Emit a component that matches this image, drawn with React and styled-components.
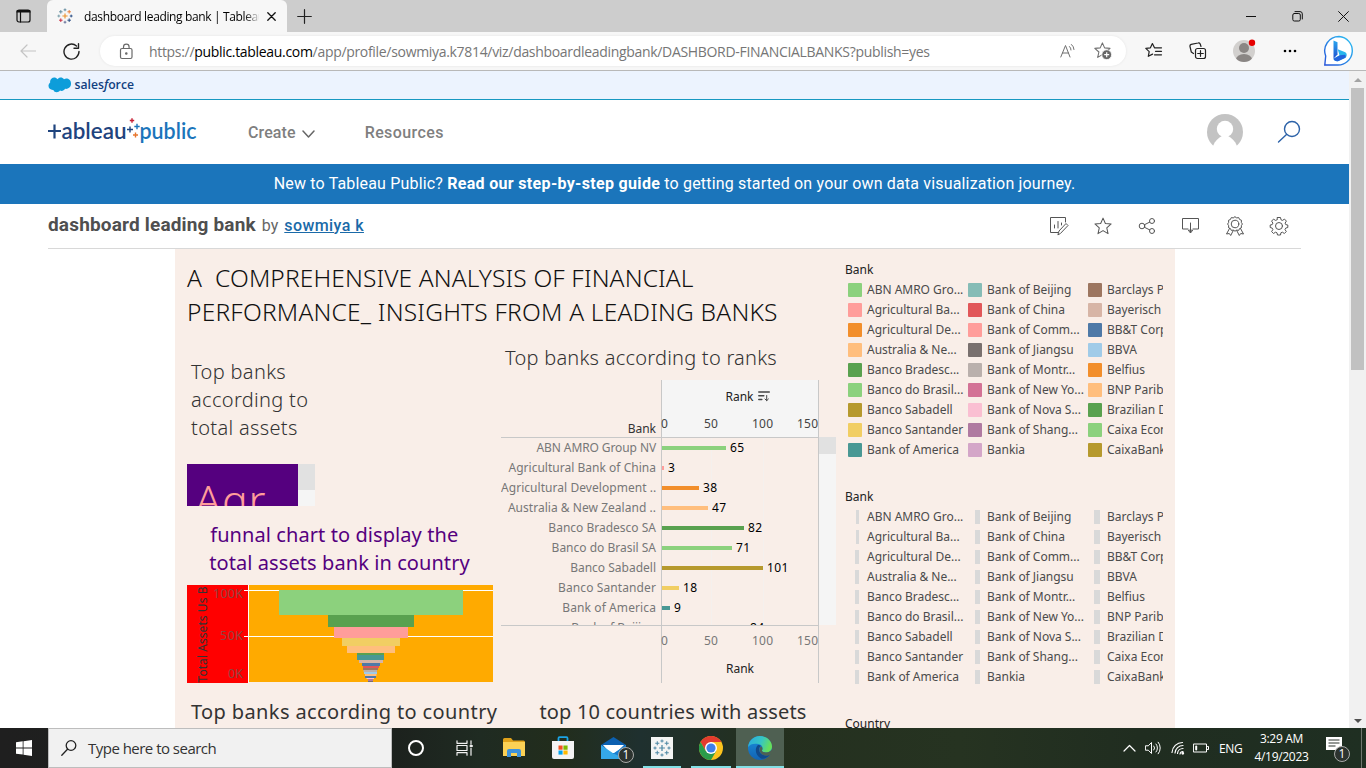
import React from "react";
import styled, { createGlobalStyle } from "styled-components";

const UI = `"Open Sans", "Noto Sans", sans-serif`;
const BENTON = `Roboto, "Liberation Sans", sans-serif`;
const VIZ = `"Noto Sans", "Open Sans", sans-serif`;

const Global = createGlobalStyle`
  * { box-sizing: border-box; }
  body { margin: 0; overflow: hidden; background: #fff; }
  h1, h2, h3, p { margin: 0; font-weight: inherit; }
  svg { display: block; flex: none; }
`;

/* ---------- browser chrome ---------- */
const Screen = styled.div`
  width: 1366px; height: 768px; display: flex; flex-direction: column; overflow: hidden;
  font-family: ${UI};
`;
const TabStrip = styled.div`
  height: 32px; flex: none; background: #cdcdcd; display: flex; align-items: center;
`;
const TabActions = styled.div`
  width: 47px; display: flex; justify-content: center;
`;
const Tab = styled.div`
  width: 240px; height: 32px; background: #f7f7f7; border-radius: 6px 6px 0 0;
  display: flex; align-items: center; padding: 0 11px 0 10px;
`;
const TabTitle = styled.div`
  width: 175px; margin-left: 11px; overflow: hidden; white-space: nowrap; font-size: 12px;
  letter-spacing: -0.36px; color: #000;
  mask-image: linear-gradient(to right, #000 160px, transparent 177px);
`;
const TabClose = styled.div`margin-left: auto;`;
const NewTab = styled.div`margin-left: 10px;`;
const WindowButtons = styled.div`
  margin-left: auto; display: flex;
  & > div { width: 46px; height: 32px; display: grid; place-items: center; }
`;
const Toolbar = styled.div`
  height: 39px; flex: none; background: #f7f7f7; border-bottom: 1px solid #b8b8b8;
  display: flex; align-items: center; padding-left: 20px;
`;
const ReloadSlot = styled.div`margin-left: 27px;`;
const AddressBar = styled.div`
  width: 1026px; height: 30px; margin-left: 20px; border-radius: 15px; background: #fff;
  box-shadow: 0 0 3px rgba(0,0,0,.08); display: flex; align-items: center; padding: 0 14px 0 19px;
`;
const Url = styled.div`
  margin-left: 15px; font-size: 14px; letter-spacing: -0.315px; color: #767676; white-space: nowrap;
  b { font-weight: 400; color: #000; }
`;
const AddressIcons = styled.div`margin-left: auto; display: flex; align-items: center; gap: 18px;`;
const ToolIcons = styled.div`
  flex: 1; display: flex; align-items: center; padding-left: 19px; gap: 25.500px;
`;

/* ---------- page ---------- */
const Viewport = styled.div`height: 657px; flex: none; display: flex; background: #fff;`;
const Page = styled.div`width: 1349px; overflow: hidden; display: flex; flex-direction: column;`;
const Scrollbar = styled.div`
  width: 17px; background: #f1f1f1; display: flex; flex-direction: column; align-items: center;
  padding: 7px 0 5px;
`;
const Thumb = styled.div`width: 13px; height: 282px; margin: 6px 0 auto; background: #c1c1c1;`;

const SalesforceBar = styled.div`
  height: 29px; flex: none; background: #ecf3fe; border-bottom: 1px solid #1798c1;
  padding: 5px 0 0 48px; display: flex;
`;
const SiteHeader = styled.header`
  height: 64px; flex: none; display: flex; align-items: center; padding: 0 48px;
  font-family: ${BENTON};
`;
const NavItem = styled.div`
  display: flex; align-items: center; gap: 6px; font-size: 16px; font-weight: 500; color: #7f7f7f;
  margin-left: ${(p) => p.$gap}px; letter-spacing: ${(p) => p.$track || 0}px;
`;
const Chevron = styled.span`padding-top: 4px;`;
const HeaderRight = styled.div`margin-left: auto; display: flex; align-items: center; gap: 34px;`;
const Banner = styled.div`
  height: 40px; flex: none; background: #1b75bb; color: #fff; text-align: center;
  font: 400 16px/39px ${BENTON}; letter-spacing: 0.17px;
  b { font-weight: 700; letter-spacing: .32px; }
`;
const TitleRow = styled.div`
  height: 45px; flex: none; margin: 0 48px; border-bottom: 1px solid #d8d8d8; display: flex;
  align-items: center; font-family: ${BENTON}; padding-right: 12px;
`;
const VizTitle = styled.h1`
  font-size: 19px; font-weight: 700; color: #4f4f4f; letter-spacing: 0.17px; white-space: nowrap;
  padding-bottom: 4px;
`;
const Byline = styled.div`
  padding-bottom: 2px; margin-left: 6px; font-size: 16px; color: #666; white-space: nowrap;
  a { color: #1a6aa8; font-weight: 500; text-decoration: underline; margin-left: 2px; letter-spacing: .42px; }
`;
const Actions = styled.div`margin-left: auto; display: flex; gap: 24px; align-items: center;`;

/* ---------- dashboard ---------- */
const Dashboard = styled.main`
  width: 1000px; height: 479px; margin-left: 175px; background: #f9eee8; overflow: hidden;
  display: flex; font-family: ${VIZ}; color: #333;
`;
const MainColumn = styled.div`width: 660px; flex: none; padding-left: 12px;`;
const Heading = styled.h2`
  height: 95px; padding-top: 12px; font-size: 24.5px; line-height: 34px; font-weight: 300;
  color: #111; white-space: pre;
`;
const HeadingLine = styled.span`display: block; letter-spacing: ${(p) => p.$track}px;`;
const Panels = styled.div`display: flex; height: 339px;`;
const LeftPanel = styled.section`width: 314px; flex: none;`;
const PanelTitle = styled.h3`
  font-size: 20px; line-height: 28px; font-weight: ${(p) => p.$weight || 300};
  color: ${(p) => p.$color || "#333"}; text-align: ${(p) => p.$align || "left"};
  letter-spacing: ${(p) => p.$track || 0}px; padding: ${(p) => p.$pad || 0}; white-space: nowrap;
`;
const WordCloud = styled.div`
  width: 128px; height: 42px; margin-top: 22px; display: flex; overflow: hidden; background: #f5f5f5;
`;
const CloudCanvas = styled.div`
  width: 111px; height: 42px; background: #55007f; color: #ff9d9a; overflow: hidden;
  font-size: 43px; line-height: 42px; font-weight: 300; padding: 15px 0 0 8px; letter-spacing: .8px;
`;
const CloudThumb = styled.div`width: 17px; height: 26px; background: #e1e1e1;`;
const RankPanel = styled.section`width: 335px; flex: none;`;
const RankTable = styled.div`display: flex; margin-top: 8px; height: 303px;`;
const RankGrid = styled.div`width: 318px; flex: none;`;
const RankHead = styled.div`
  height: 58px; display: flex; border-bottom: 1px solid #c8c8c8; font-size: 12px;
`;
const HeadLabel = styled.div`
  width: 160px; display: flex; align-items: flex-end; justify-content: flex-end;
  padding-right: 5px; font-weight: 450; letter-spacing: 0;
`;
const HeadAxis = styled.div`
  width: 158px; background: #f5f5f5; border: 1px solid #c8c8c8; border-width: 0 1px;
`;
const AxisName = styled.div`
  display: flex; justify-content: center; align-items: center; gap: 4px; height: ${(p) => p.$h}px;
  color: #222; font-weight: 450; padding-left: ${(p) => p.$shift || 0}px;
`;
const Ticks = styled.div`
  display: grid; grid-template-columns: 43px 48px 45px 24px; font-size: 12px; line-height: 24px;
  color: ${(p) => p.$color}; letter-spacing: .2px; margin: 0 -1px;
`;
const RankBody = styled.div`height: 187px; overflow: hidden;`;
const RankRow = styled.div`height: 20px; display: flex; font-size: 12px; line-height: 20px;`;
const BankName = styled.div`
  width: 160px; text-align: right; padding-right: 5px; color: #777; white-space: nowrap;
  letter-spacing: ${(p) => p.$track}px;
`;
const BarCell = styled.div`
  width: 158px; display: flex; align-items: center; border: 1px solid #c8c8c8; border-width: 0 1px;
  color: #000; letter-spacing: .35px;
  background: linear-gradient(#f5f0ed, #f5f0ed) 49px 0 / 1px 100% no-repeat,
    linear-gradient(#f5f0ed, #f5f0ed) 101px 0 / 1px 100% no-repeat;
`;
const Bar = styled.div`
  height: 4px; width: ${(p) => p.$value - (p.$value < 80 ? 1 : 0)}px; background: ${(p) => p.$color};
  margin-right: 4px;
`;
const RankFoot = styled.div`display: flex; height: 58px; border-top: 1px solid #c8c8c8;`;
const FootSpacer = styled.div`width: 160px;`;
const FootAxis = styled.div`
  width: 158px; border: 1px solid #c8c8c8; border-width: 0 1px; font-size: 12px; padding-top: 3px;
`;
const RankScroll = styled.div`
  width: 17px; height: 188px; margin-top: 57px; background: #f5f5f5;
  &::before { content: ""; display: block; height: 17px; background: #e1e1e1; }
`;
const BottomTitles = styled.div`display: flex; padding: 15px 0 0 4px;`;
const SecondTitle = styled.div`margin-left: 42px;`;

const LegendColumn = styled.aside`width: 328px; padding: 11px 0 0 10px; font-size: 12px;`;
const Legend = styled.section`height: 227px;`;
const LegendTitle = styled.h3`
  height: 20px; font-size: 12px; line-height: 20px; color: #222; font-weight: 450; letter-spacing: 0;
`;
const LegendGrid = styled.div`
  width: 318px; overflow: hidden; display: grid; grid-template-columns: repeat(3, 120px);
  grid-template-rows: repeat(9, 20px); grid-auto-flow: column; padding-left: 3px;
`;
const LegendItem = styled.div`
  display: flex; align-items: center; gap: 5px; white-space: nowrap; line-height: 20px;
  color: #4b4b4b; letter-spacing: -.02px;
`;
const Swatch = styled.span`width: 14px; height: 14px; flex: none; border-radius: 1px; background: ${(p) => p.$color};`;
const SizeSlot = styled.span`width: 14px; height: 14px; flex: none; display: flex; justify-content: center; padding-left: 4px;`;
const SizeMark = styled.span`width: ${(p) => p.$w}px; height: 14px; background: #d9d9d9;`;

/* ---------- taskbar ---------- */
const Taskbar = styled.footer`
  height: 40px; flex: none; display: flex; align-items: stretch; color: #fff;
  background: linear-gradient(90deg, #1f1f1f 0, #1c211d 390px, #1f2b22 480px, #222d1c 560px, #1f302f 640px, #24301f 760px, #263321 960px, #202d20 1140px, #1f2f22 1366px);
`;
const Start = styled.div`width: 48px; display: grid; place-items: center;`;
const SearchBox = styled.div`
  width: 344px; background: #f1f1f1; border: 1px solid #bdbdbd; display: flex; align-items: center;
  padding-left: 12px; gap: 11px; color: #333; font-size: 15px; letter-spacing: -0.52px;
`;
const TaskButton = styled.div`
  width: ${(p) => p.$w || 49}px; display: grid; place-items: center; position: relative;
  background: ${(p) => (p.$active ? "#4f6052" : "transparent")};
  &::after {
    content: ""; position: absolute; bottom: 0; height: 2px; left: ${(p) => (p.$active ? 0 : 5)}px;
    right: ${(p) => (p.$active ? 0 : 5)}px; background: ${(p) => (p.$open ? "#82dfe5" : "transparent")};
  }
`;
const Count = styled.span`
  position: absolute; right: ${(p) => p.$right}px; bottom: ${(p) => p.$bottom}px;
  width: 16px; height: 16px; border-radius: 50%; background: #2c332f; border: 1px solid #a9aaa9;
  font-size: 12px; line-height: 14px; text-align: center;
`;
const Tray = styled.div`margin-left: auto; display: flex; align-items: center; font-size: 12px;`;
const TrayIcon = styled.div`margin-right: ${(p) => p.$gap}px;`;
const Lang = styled.div`width: 35px; letter-spacing: -0.4px;`;
const Clock = styled.div`
  width: 55px; text-align: center; line-height: 18px; letter-spacing: -0.3px; white-space: nowrap;
  display: flex; flex-direction: column; align-items: center;
`;
const Notify = styled.div`position: relative; margin: 0 16px 0 17px; padding-top: 2px; width: 24px; height: 28px;`;
const ShowDesktop = styled.div`width: 5px; height: 40px; margin-left: -5px; border-left: 1px solid #6f776f;`;

/* ---------- icons ---------- */
const Line = ({ w = 20, h = w, vb, c = "#333", sw = 1, children }) => (
  <svg width={w} height={h} viewBox={vb || `0 0 ${w} ${h}`} fill="none" stroke={c} strokeWidth={sw} strokeLinecap="round" strokeLinejoin="round">
    {children}
  </svg>
);
const plus = (x, y, r) => `M${x - r} ${y}h${2 * r}M${x} ${y - r}v${2 * r}`;
const TableauMark = ({ size, mono }) => (
  <svg width={size} height={size} viewBox="0 0 16 16" fill="none" strokeWidth=".9">
    <path d={plus(8, 8, 2.6)} stroke={mono || "#eb912b"} strokeWidth="1.1" />
    <path d={plus(8, 1.8, 1.4)} stroke={mono || "#5b879b"} />
    <path d={plus(8, 14.2, 1.4)} stroke={mono || "#5c6692"} />
    <path d={plus(1.8, 8, 1.4)} stroke={mono || "#7099a6"} />
    <path d={plus(14.2, 8, 1.4)} stroke={mono || "#1f447e"} />
    <path d={plus(3.8, 3.8, 1.8)} stroke={mono || "#59879b"} />
    <path d={plus(12.2, 3.8, 1.8)} stroke={mono || "#e8762c"} />
    <path d={plus(3.8, 12.2, 1.8)} stroke={mono || "#c72035"} />
    <path d={plus(12.2, 12.2, 1.8)} stroke={mono || "#1f457e"} />
  </svg>
);
const STAR = "M9 1.5l2.2 5 5.4.5-4.1 3.6 1.2 5.4L9 13.2 4.3 16l1.2-5.4L1.4 7l5.4-.5z";

const SalesforceLogo = () => (
  <svg width="88" height="18" viewBox="0 0 88 18">
    <path d="M9.6 3.2C11 1.2 14.4 1 16 3.2c3-1.7 7.2.4 7 4.6 0 3.700-3.200 5.600-6 5-1 2-3.400 2.600-5 1.700-1.700 2.600-5.800 2.100-6.600-.5C2.500 14.300.3 12.100.5 9.500.7 8 1.400 7 2.200 6.400 1.300 2.600 6.500-.5 9.600 3.200z" fill="#0d9dda" />
    <text x="26.500" y="12.500" fontFamily="Open Sans" fontSize="12.500" fontWeight="600" fill="#123f80" textLength="59.500" lengthAdjust="spacingAndGlyphs">sales<tspan fontStyle="italic">f</tspan>orce</text>
  </svg>
);
const TableauLogo = () => (
  <svg width="150" height="30" viewBox="0 0 150 30">
    <g fill="none" strokeWidth="2.200">
      <path d="M0 14h13M6.500 7.500v14" stroke="#1f447e" />
      <path d={plus(82, 12.5, 3)} stroke="#1f447e" strokeWidth="1.400" />
      <path d={plus(84, 3.5, 2.2)} stroke="#c72035" strokeWidth="1.400" />
      <path d={plus(89, 9.5, 2.7)} stroke="#1b75bb" strokeWidth="1.400" />
      <path d={plus(87.5, 18, 2.5)} stroke="#e8762c" strokeWidth="1.400" />
    </g>
    <text x="13.500" y="22" fontFamily="Lato" fontSize="22" fontWeight="600" fill="#1f447e" textLength="65" lengthAdjust="spacingAndGlyphs">ableau</text>
    <text x="91.500" y="22" fontFamily="Lato" fontSize="22" fontWeight="600" fill="#1b75bb" textLength="57" lengthAdjust="spacingAndGlyphs">public</text>
  </svg>
);
const BingIcon = () => (
  <svg width="32" height="32" viewBox="0 0 32 32">
    <defs>
      <linearGradient id="bg1" x1="1" y1="0" x2="0" y2="1"><stop stopColor="#2cc4f4" /><stop offset="1" stopColor="#2452d9" /></linearGradient>
      <linearGradient id="bg2" x1="0" y1="0" x2="0" y2="1"><stop stopColor="#2aa7ee" /><stop offset="1" stopColor="#1d4fd0" /></linearGradient>
    </defs>
    <path d="M16 1.500A14.200 14.200 0 1 1 14 30H1.800l.9-9A14.300 14.300 0 0 1 16 1.500z" fill="#fff" stroke="url(#bg1)" strokeWidth="1.400" />
    <path d="M10.500 5.500l4 1.800v12.200l-4 4.300z" fill="url(#bg2)" />
    <path d="M10.500 23.800l6-3.600-1.800-6 7 2.700c2.800 1.300 2.500 4.600.3 6l-6.500 3c-2 .9-5-.6-5-2.100z" fill="#28b5ed" />
    <path d="M10.500 23.800l6.500-3.600 4.900-.5c1.300.8 1 2.400 0 3.200l-6.400 3c-2 .9-5-.6-5-2.100z" fill="#2263dc" />
  </svg>
);
const EdgeIcon = () => (
  <svg width="24" height="24" viewBox="0 0 24 24">
    <defs>
      <linearGradient id="e1" x1="0" y1="0" x2="1" y2=".3"><stop stopColor="#2aa9e0" /><stop offset=".6" stopColor="#37c6c2" /><stop offset="1" stopColor="#66df5b" /></linearGradient>
      <linearGradient id="e2" x1="0" y1="0" x2="0" y2="1"><stop stopColor="#1b8fdd" /><stop offset="1" stopColor="#1263b3" /></linearGradient>
    </defs>
    <circle cx="12" cy="12" r="12" fill="url(#e2)" />
    <path d="M0 11C1 4 6 0 12 0c7 0 12 5 12 10.500 0 4-3 6-6 6-3.500 0-4.500-1.500-4-2.300.8-1.200 1.400-5.200-3.500-6.200C6 7 2 8 0 11z" fill="url(#e1)" />
    <path d="M10 9c-3.500 3-3 10 3 13.500 3 .9 7-1 9-4-5 2.500-11 0-11-5 0-2 1-3 2-3.500C12 9 11 8.700 10 9z" fill="#114a8b" />
    <path d="M13.500 10.500c1.400 1.500 1 3 .5 3.700-.5.800.5 2.300 4 2.300 2.500 0 4.600-1 6-3v4l-2 1.500c-4.500 2-10.500-.5-10.500-5.500 0-1.500.8-2.600 2-3z" fill="#4f6052" />
  </svg>
);
const ChromeIcon = () => (
  <svg width="24" height="24" viewBox="0 0 24 24">
    <circle cx="12" cy="12" r="12" fill="#fcc31e" />
    <path d="M12 6h10.400A12 12 0 0 0 1.600 6L6.800 15z" fill="#e33b2e" />
    <path d="M1.600 6A12 12 0 0 0 12 24l5.200-9H6.800z" fill="#2a9c4a" />
    <circle cx="12" cy="12" r="6" fill="#fff" /><circle cx="12" cy="12" r="4.600" fill="#3f7fe8" />
  </svg>
);

/* ---------- data ---------- */
const ranks = [
  ["ABN AMRO Group NV", 65, "#8cd17d", -0.1], ["Agricultural Bank of China", 3, "#ff9d9a", 0.02],
  ["Agricultural Development ..", 38, "#f28e2b", 0.05], ["Australia & New Zealand ..", 47, "#ffbe7d", 0.03],
  ["Banco Bradesco SA", 82, "#59a14f", 0], ["Banco do Brasil SA", 71, "#8cd17d", 0],
  ["Banco Sabadell", 101, "#b6992d", 0], ["Banco Santander", 18, "#f1ce63", 0.1],
  ["Bank of America", 9, "#499894", 0.1], ["Bank of Beijing", 84, "#86bcb6", 0],
];
const banks = [
  ["ABN AMRO Gro...", "#8cd17d"], ["Agricultural Ba...", "#ff9d9a"], ["Agricultural De...", "#f28e2b"],
  ["Australia & Ne...", "#ffbe7d"], ["Banco Bradesc...", "#59a14f"], ["Banco do Brasil...", "#8cd17d"],
  ["Banco Sabadell", "#b6992d"], ["Banco Santander", "#f1ce63"], ["Bank of America", "#499894"],
  ["Bank of Beijing", "#86bcb6"], ["Bank of China", "#e15759"], ["Bank of Comm...", "#ff9d9a"],
  ["Bank of Jiangsu", "#79706e"], ["Bank of Montr...", "#bab0ac"], ["Bank of New Yo...", "#d37295"],
  ["Bank of Nova S...", "#fabfd2"], ["Bank of Shang...", "#b07aa1"], ["Bankia", "#d4a6c8"],
  ["Barclays PLC", "#9d7660"], ["Bayerisch", "#d7b5a6"], ["BB&T Corp", "#4e79a7"],
  ["BBVA", "#a0cbe8"], ["Belfius", "#f28e2b"], ["BNP Paribas", "#ffbe7d"],
  ["Brazilian Dev...", "#59a14f"], ["Caixa Econo...", "#8cd17d"], ["CaixaBank", "#b6992d"],
];
const funnel = [
  [279, 463, 590, 615, "#8cd17d"], [328, 414, 615, 627, "#59a14f"], [334, 408, 627, 638, "#ff9d9a"],
  [342, 400, 638, 646, "#f1ce63"], [347, 395, 646, 653, "#ffbe7d"], [357, 384, 653, 655, "#59a14f"],
  [357, 384, 655, 660, "#499894"], [359, 383, 660, 663, "#d7b5a6"], [362, 380, 663, 666, "#4e79a7"],
  [363, 379, 666, 668, "#e15759"], [363, 378, 668, 670, "#9d7660"], [363.5, 377, 670, 672, "#bab0ac"],
  [364, 377, 672, 674, "#a0cbe8"], [365, 376.5, 674, 676, "#ffbe7d"], [365, 376, 676, 678, "#4e79a7"],
  [366.5, 374, 678, 679, "#fabfd2"], [368, 373, 679, 681, "#b07aa1"], [368, 373, 681, 682, "#79706e"],
];

const FunnelChart = () => (
  <svg width="306" height="98" viewBox="187 585 306 98" fontFamily="Noto Sans">
    <rect x="187" y="585" width="61" height="98" fill="#f00" />
    <rect x="248" y="585" width="1" height="98" fill="#fff" />
    <rect x="249" y="585" width="244" height="97" fill="#ffaa00" />
    <path d="M244 590.500h249M244 636.500h249" stroke="#fff" />
    {funnel.map(([x1, x2, y1, y2, c]) => (
      <rect key={y1} x={x1} y={y1} width={x2 - x1} height={y2 - y1} fill={c} />
    ))}
    <g fontSize="12.500" fill="#8f4540" textAnchor="end">
      <text x="243" y="598" textLength="30">100K</text>
      <text x="243" y="640" textLength="23">50K</text>
      <text x="243" y="678" textLength="15">0K</text>
    </g>
    <text transform="translate(207 682.5) rotate(-90)" fontSize="12" fill="#333" textLength="96">Total Assets Us B</text>
  </svg>
);

const SortIcon = () => (
  <Line w={12} h={12} c="#444" sw={1.5}><path d="M.8 2h10.500M.8 5.800h5M.8 9.500h3" /><path d="M8.700 5.500v5M7 9l1.700 1.700L10.400 9" strokeWidth="1" /></Line>
);

const BankLegend = ({ sizes }) => (
  <Legend>
    <LegendTitle>Bank</LegendTitle>
    <LegendGrid>
      {banks.map(([name, color], i) => (
        <LegendItem key={name}>
          {sizes ? <SizeSlot><SizeMark $w={i < 2 ? 3 : i < 9 ? 4 : i < 18 ? 5 : 6.5} /></SizeSlot> : <Swatch $color={color} />}
          {name}
        </LegendItem>
      ))}
    </LegendGrid>
  </Legend>
);

const AxisTicks = ({ color }) => (
  <Ticks $color={color}><span>0</span><span>50</span><span>100</span><span>150</span></Ticks>
);

export default function App() {
  return (
    <Screen>
      <Global />
      <TabStrip>
        <TabActions>
          <Line w={15} h={14} c="#111" sw={1.2}><rect x="1" y="1" width="13" height="12" rx="2" /><path d="M1 3h13M4.500 3.500v9.500" /><path d="M1.500 2h12" strokeWidth="2" /></Line>
        </TabActions>
        <Tab>
          <TableauMark size={16} />
          <TabTitle>dashboard leading bank | Tableau Public</TabTitle>
          <TabClose><Line w={9} c="#111" sw={1.3}><path d="M.8.8l7.400 7.400M8.200.8L.8 8.200" /></Line></TabClose>
        </Tab>
        <NewTab><Line w={15} c="#222" sw={1.2}><path d={plus(7.5, 7.5, 6.8)} /></Line></NewTab>
        <WindowButtons>
          <div><Line w={10} c="#111"><path d="M0 5.500h10" /></Line></div>
          <div><Line w={11} c="#111"><rect x=".8" y="2.500" width="7.500" height="7.500" rx="1.500" /><path d="M3 .6h5a2.300 2.300 0 0 1 2.300 2.300V8" /></Line></div>
          <div><Line w={11} c="#111"><path d="M.6.6l9.800 9.800M10.400.6L.6 10.400" /></Line></div>
        </WindowButtons>
      </TabStrip>
      <Toolbar>
        <Line w={16} h={14} c="#c4c4c4" sw={1.2}><path d="M15.500 7H1M7 1L1 7l6 6" /></Line>
        <ReloadSlot><Line w={17} c="#222" sw={1.4}><path d="M16 8.500A7.500 7.500 0 1 1 13.500 3M15.500.8V5.200H11" /></Line></ReloadSlot>
        <AddressBar>
          <Line w={15} h={17} c="#6a6a6a" sw={1.2}><rect x="1.500" y="5.500" width="11.500" height="10" rx="1.500" /><path d="M4.500 5.500V4a2.800 2.800 0 0 1 5.600 0v1.500" /><circle cx="7.300" cy="10.500" r=".7" fill="#666" /></Line>
          <Url>https://<b>public.tableau.com</b>/app/profile/sowmiya.k7814/viz/dashboardleadingbank/DASHBORD-FINANCIALBANKS?publish=yes</Url>
          <AddressIcons>
            <Line w={16} h={16} c="#707070"><path d="M.8 14L5.500 2.500 10 14M2.400 10h6.200M9.500 3.500a4.500 4.500 0 0 1 1.500 3.500M11.500 1.500A7 7 0 0 1 14 6.500" /></Line>
            <svg width="18" height="18" viewBox="0 0 18 18"><path d={STAR} transform="translate(-.6 -.6)" fill="none" stroke="#707070" strokeWidth="1.100" strokeLinejoin="round" /><circle cx="12.700" cy="12.700" r="4.900" fill="#666" stroke="#fff" strokeWidth=".8" /><path d={plus(12.7, 12.7, 2.5)} stroke="#fff" strokeWidth="1.200" /></svg>
          </AddressIcons>
        </AddressBar>
        <ToolIcons>
          <Line w={18} c="#222" sw={1.2}><path d="M9.500 5.800L7.400 1.600l-2 4.200-4.600.6 3.400 3.200-.9 4.700 4.300-2.200M9.500 5.800h7M10.500 9.300h6M9.500 12.800h7" /></Line>
          <Line w={18} c="#222" sw={1.2}><rect x="6.500" y="6.500" width="10" height="10" rx="2" /><path d={plus(11.5, 11.5, 2.8)} /><path d="M4.500 11.500L2.300 10 1 4.500Q.6 3 2.200 2.400L9 1Q10.500.6 11.200 2l.8 2.500" /></Line>
          <svg width="24" height="24" viewBox="0 0 24 24"><defs><clipPath id="av"><circle cx="12" cy="12" r="11" /></clipPath></defs><circle cx="12" cy="12" r="11" fill="#d2d0ce" /><g clipPath="url(#av)" fill="#8a8684"><circle cx="12" cy="9" r="5" /><ellipse cx="12" cy="21" rx="8.200" ry="6" /></g><circle cx="20" cy="3.800" r="3.200" fill="#e60000" /></svg>
          <svg width="16" height="6" viewBox="0 0 16 6"><circle cx="3" cy="3" r="1.300" /><circle cx="8" cy="3" r="1.300" /><circle cx="13" cy="3" r="1.300" /></svg>
          <BingIcon />
        </ToolIcons>
      </Toolbar>

      <Viewport>
        <Page>
          <SalesforceBar><SalesforceLogo /></SalesforceBar>
          <SiteHeader>
            <TableauLogo />
            <NavItem $gap={50} $track={0.1}>Create <Chevron><Line w={13} h={9} c="#666" sw={1.5}><path d="M1 1l5.500 6L12 1" /></Line></Chevron></NavItem>
            <NavItem $gap={50} $track={0.4}>Resources</NavItem>
            <HeaderRight>
              <svg width="36" height="36" viewBox="0 0 36 36"><defs><clipPath id="user"><path d="M0 0h36v33H0z" /></clipPath></defs><g clipPath="url(#user)"><circle cx="18" cy="18" r="18" fill="#c3c3c3" /><circle cx="18" cy="15" r="8.200" fill="#fff" /><path d="M6 32C8 27 11 24 15 22h6c4 2 7 5 9 10v4H6z" fill="#fff" /></g></svg>
              <Line w={24} h={24} c="#2c62a8" sw={1.4}><circle cx="15" cy="9" r="7.500" /><path d="M9.500 14.500L1.500 22" /></Line>
            </HeaderRight>
          </SiteHeader>
          <Banner>New to Tableau Public? <b>Read our step-by-step guide</b> to getting started on your own data visualization journey.</Banner>
          <TitleRow>
            <VizTitle>dashboard leading bank</VizTitle>
            <Byline>by <a>sowmiya k</a></Byline>
            <Actions>
              <Line w={20} c="#555"><path d="M9 16.500H1.500v-15h15V6M5.500 12V9M9 12V5.500M12.500 9V7" /><path d="M9 18.500l1-3.500 7-7.500 2 2-7.300 7.700z" /></Line>
              <Line w={20} c="#555"><path d={STAR} transform="translate(.4 .5) scale(1.070)" strokeWidth=".95" /></Line>
              <Line w={20} c="#555"><circle cx="5" cy="10" r="2.800" /><circle cx="15" cy="5" r="2.500" /><circle cx="15" cy="15" r="2.500" /><path d="M7.500 8.700l5.200-2.600M7.500 11.300l5.200 2.600" /></Line>
              <Line w={20} c="#555"><path d="M7 13H1.500V2.500h16V13H12M9.500 7v9.500M7.500 14.500l2 2.500 2-2.500z" /></Line>
              <Line w={20} c="#555"><circle cx="10" cy="8" r="3.800" /><path d="M10 .8l1.700 1.100 2-.3.900 1.900 1.900.8-.2 2.100L17.400 8l-1.100 1.700.2 2-1.900.8-.9 1.900-2-.3L10 15.200l-1.700-1.100-2 .3-.9-1.900-1.900-.8.2-2L2.600 8l1.100-1.600-.2-2.100 1.900-.8.9-1.900 2 .3z" /><path d="M4.500 12.500L1.500 18l2.800-.5 1.400 2 2.600-5M15.500 12.500l3 5.500-2.800-.5-1.400 2-2.600-5" /></Line>
              <Line w={20} c="#555"><circle cx="10" cy="10" r="3.500" /><path d="M8.500 1.500h3l.5 2.300 1.500.6 2-1.300 1.900 2-1.300 2 .6 1.500 2.100.4v2.500l-2.100.6-.7 1.500 1.300 1.900-1.900 2-2-1.300-1.500.6-.4 2.200h-3l-.5-2.200-1.500-.6-2 1.300-1.900-2 1.300-1.900-.7-1.500-2-.6V9l2-.4.700-1.500-1.300-2 1.900-2 2 1.300 1.500-.6z" /></Line>
            </Actions>
          </TitleRow>

          <Dashboard>
            <MainColumn>
              <Heading>
                <HeadingLine $track={0.13}>{"A  COMPREHENSIVE ANALYSIS OF FINANCIAL"}</HeadingLine>
                <HeadingLine $track={0.21}>PERFORMANCE_ INSIGHTS FROM A LEADING BANKS</HeadingLine>
              </Heading>
              <Panels>
                <LeftPanel>
                  <PanelTitle $track={0.33} $pad="14px 0 0 4px">Top banks<br />according to<br />total assets</PanelTitle>
                  <WordCloud><CloudCanvas>Agr</CloudCanvas><CloudThumb /></WordCloud>
                  <PanelTitle $weight={450} $track={0.08} $color="#55007f" $align="center" $pad="15px 9px 8px 0">funnal chart to display the&nbsp;&nbsp;<br />total assets bank in country</PanelTitle>
                  <FunnelChart />
                </LeftPanel>
                <RankPanel>
                  <PanelTitle $track={0.24} $pad="0 0 0 4px">Top banks according to ranks</PanelTitle>
                  <RankTable>
                    <RankGrid>
                      <RankHead>
                        <HeadLabel>Bank</HeadLabel>
                        <HeadAxis>
                          <AxisName $h={32} $shift={15}>Rank <SortIcon /></AxisName>
                          <AxisTicks color="#444" />
                        </HeadAxis>
                      </RankHead>
                      <RankBody>
                        {ranks.map(([name, value, color, track]) => (
                          <RankRow key={name}>
                            <BankName $track={track}>{name}</BankName>
                            <BarCell><Bar $value={value} $color={color} />{value}</BarCell>
                          </RankRow>
                        ))}
                      </RankBody>
                      <RankFoot>
                        <FootSpacer />
                        <FootAxis><AxisTicks color="#777" /><AxisName $h={30}>Rank</AxisName></FootAxis>
                      </RankFoot>
                    </RankGrid>
                    <RankScroll />
                  </RankTable>
                </RankPanel>
              </Panels>
              <BottomTitles>
                <PanelTitle $weight={450} $track={0.38}>Top banks according to country</PanelTitle>
                <SecondTitle><PanelTitle $weight={450} $track={0.18}>top 10 countries with assets</PanelTitle></SecondTitle>
              </BottomTitles>
            </MainColumn>
            <LegendColumn>
              <BankLegend />
              <BankLegend sizes />
              <LegendTitle>Country</LegendTitle>
            </LegendColumn>
          </Dashboard>
        </Page>
        <Scrollbar>
          <svg width="8" height="4" viewBox="0 0 8 4"><path d="M0 4l4-4 4 4z" fill="#a3a3a3" /></svg>
          <Thumb />
          <svg width="8" height="4" viewBox="0 0 8 4"><path d="M0 0l4 4 4-4z" fill="#505050" /></svg>
        </Scrollbar>
      </Viewport>

      <Taskbar>
        <Start><svg width="16" height="16" viewBox="0 0 16 16" fill="#fff"><path d="M0 2.200l6.700-.9v6.200H0zM7.500 1.200L16 0v7.500H7.500zM0 8.400h6.700v6.200L0 13.700zM7.500 8.400H16V16l-8.500-1.200z" /></svg></Start>
        <SearchBox>
          <Line w={16} c="#222" sw={1.3}><circle cx="10" cy="5.500" r="4.800" /><path d="M6.500 9.200L.8 15.200" /></Line>
          Type here to search
        </SearchBox>
        <TaskButton $w={48}><Line w={18} c="#fff" sw={2}><circle cx="9" cy="9" r="7" /></Line></TaskButton>
        <TaskButton><Line w={18} h={16} c="#f2f2f2" sw={1.2}><path d="M1 .8v2.500h10V.8M1 15.200v-2.500h10v2.500M1 5.500h10v5H1zM15 .8v3.500M15 8v7.200" /><path d="M14.500 6h1.500" strokeWidth="2" /></Line></TaskButton>
        <TaskButton><svg width="22" height="20" viewBox="0 0 22 20"><path d="M0 1.500Q0 0 1.500 0H8l2 2.500h10.500Q22 2.500 22 4v14H0z" fill="#e0a21b" /><path d="M0 4h22v14H0z" fill="#fbd155" /><path d="M4 18v-5q0-2 2-2h10q2 0 2 2v6h-4v-4H8v4H4z" fill="#3e93dc" /></svg></TaskButton>
        <TaskButton $w={50}><svg width="24" height="24" viewBox="0 0 24 24"><path d="M7.500 6V2.200q0-1 1-1h7q1 0 1 1V6" fill="none" stroke="#1ba4e6" strokeWidth="1.800" /><path d="M1 5h22v16q0 2-2 2H3q-2 0-2-2z" fill="#f4f4f4" /><path d="M7.500 9.500H11.600v4.200H7.500z" fill="#f25022" /><path d="M12.400 9.500h4.200v4.200h-4.200z" fill="#7fba00" /><path d="M7.500 14.500h4.100v4.100H7.500z" fill="#00a4ef" /><path d="M12.400 14.500h4.200v4.100h-4.200z" fill="#ffb900" /></svg></TaskButton>
        <TaskButton $w={50}>
          <svg width="25" height="22" viewBox="0 0 25 22"><path d="M0 8L12.500 0 25 8v14H0z" fill="#0c60b0" /><path d="M2 8h21l-8 8H9z" fill="#fff" /><path d="M0 8l12.500 8.500L25 8v14H0z" fill="#35a8e8" /><path d="M25 8v14L12.500 16.500z" fill="#1b7fd0" /></svg>
          <Count $right={4} $bottom={5}>1</Count>
        </TaskButton>
        <TaskButton $open $w={48}><svg width="22" height="22" viewBox="0 0 22 22"><rect width="22" height="22" fill="#f4f4f4" /><svg x="2" y="2" width="18" height="18" viewBox="0 0 16 16"><TableauMark size={16} mono="#4d87a4" /></svg></svg></TaskButton>
        <TaskButton $open $w={50}><ChromeIcon /></TaskButton>
        <TaskButton $open $active $w={48}><EdgeIcon /></TaskButton>
        <Tray>
          <TrayIcon $gap={9}><Line w={13} h={8} c="#fff" sw={1.2}><path d="M1 7l5.500-5.500L12 7" /></Line></TrayIcon>
          <TrayIcon $gap={9}><Line w={17} h={14} c="#fff"><path d="M.8 4.800h2.500L6.500 1.500v11L3.300 9.200H.8zM8.800 5a3 3 0 0 1 0 4M11 3a6 6 0 0 1 0 8M13.200 1.200a9 9 0 0 1 0 11.600" /></Line></TrayIcon>
          <TrayIcon $gap={8}><Line w={14} c="#fff" sw={1.2}><path d="M1 11.500A10.500 10.500 0 0 1 11.500 1.500M4 12A8 8 0 0 1 12 4.500M6.500 12.500A5.500 5.500 0 0 1 12 7.500M9 13a3 3 0 0 1 3-2.500" /><circle cx="11.800" cy="12.300" r=".8" fill="#fff" /></Line></TrayIcon>
          <TrayIcon $gap={10}><Line w={16} h={10} c="#fff"><path d="M.8 1h12.700v8H.8zM14.500 3.500h1v3h-1" /><path d="M3.200 3.500v3" strokeWidth="2" /></Line></TrayIcon>
          <Lang>ENG</Lang>
          <Clock><span>3:29 AM</span><span>4/19/2023</span></Clock>
          <Notify>
            <svg width="18" height="18" viewBox="0 0 18 18"><path d="M0 1h16v13h-4l-3 3v-3H0z" fill="#fff" /><path d="M2.500 4h11M2.500 7h11M2.500 10h7" stroke="#2b332c" strokeWidth="1" /></svg>
            <Count $right={0} $bottom={0}>1</Count>
          </Notify>
          <ShowDesktop />
        </Tray>
      </Taskbar>
    </Screen>
  );
}
